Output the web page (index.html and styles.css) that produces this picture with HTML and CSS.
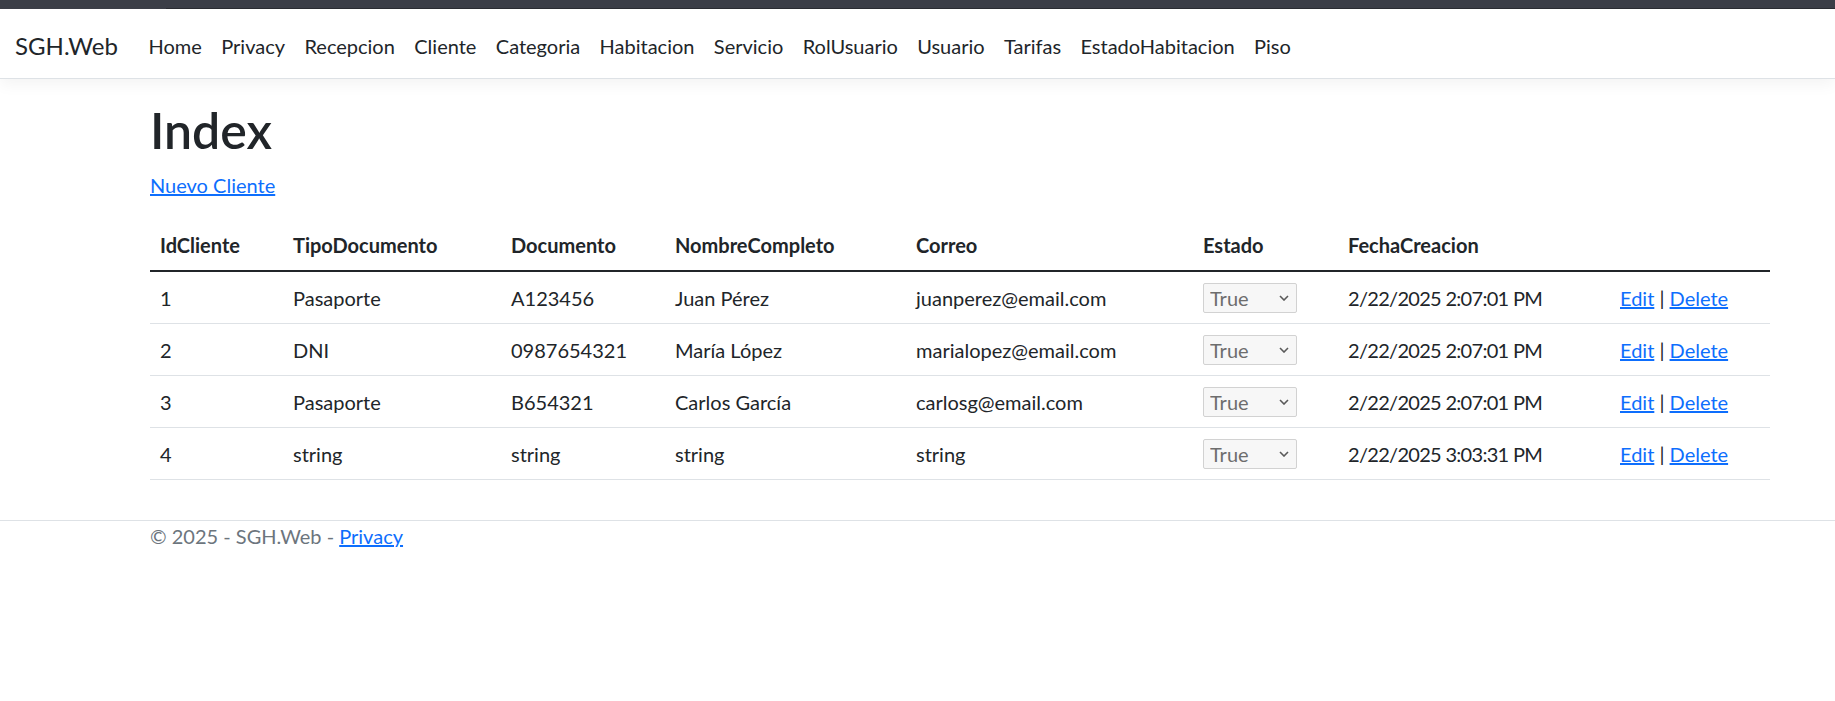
FILE: index.html
```html
<!DOCTYPE html>
<html lang="es">
<head>
<meta charset="utf-8">
<title>Index - SGH.Web</title>
<link rel="stylesheet" href="styles.css">
</head>
<body>
<div class="chrome-bar"></div>
<header class="navbar">
  <a class="brand" href="#">SGH.Web</a>
  <ul class="nav">
    <li><a href="#">Home</a></li>
    <li><a href="#">Privacy</a></li>
    <li><a href="#">Recepcion</a></li>
    <li><a href="#">Cliente</a></li>
    <li><a href="#">Categoria</a></li>
    <li><a href="#">Habitacion</a></li>
    <li><a href="#">Servicio</a></li>
    <li><a href="#">RolUsuario</a></li>
    <li><a href="#">Usuario</a></li>
    <li><a href="#">Tarifas</a></li>
    <li><a href="#">EstadoHabitacion</a></li>
    <li><a href="#">Piso</a></li>
  </ul>
</header>
<main class="container">
  <h1 class="title">Index</h1>
  <p class="actions"><a href="#">Nuevo Cliente</a></p>
  <table class="table">
    <colgroup>
      <col class="c-id"><col class="c-tipo"><col class="c-doc"><col class="c-nombre"><col class="c-correo"><col class="c-estado"><col class="c-fecha"><col class="c-acc">
    </colgroup>
    <thead>
      <tr><th>IdCliente</th><th>TipoDocumento</th><th>Documento</th><th>NombreCompleto</th><th>Correo</th><th>Estado</th><th>FechaCreacion</th><th></th></tr>
    </thead>
    <tbody>
      <tr>
        <td>1</td><td>Pasaporte</td><td>A123456</td><td>Juan Pérez</td><td>juanperez@email.com</td>
        <td><span class="select"><select disabled><option>True</option></select><svg viewBox="0 0 10 6"><path d="M1 1 L5 5 L9 1" /></svg></span></td>
        <td class="date">2/22/2025 2:07:01 PM</td>
        <td><a href="#">Edit</a> | <a href="#">Delete</a></td>
      </tr>
      <tr>
        <td>2</td><td>DNI</td><td>0987654321</td><td>María López</td><td>marialopez@email.com</td>
        <td><span class="select"><select disabled><option>True</option></select><svg viewBox="0 0 10 6"><path d="M1 1 L5 5 L9 1" /></svg></span></td>
        <td class="date">2/22/2025 2:07:01 PM</td>
        <td><a href="#">Edit</a> | <a href="#">Delete</a></td>
      </tr>
      <tr>
        <td>3</td><td>Pasaporte</td><td>B654321</td><td>Carlos García</td><td>carlosg@email.com</td>
        <td><span class="select"><select disabled><option>True</option></select><svg viewBox="0 0 10 6"><path d="M1 1 L5 5 L9 1" /></svg></span></td>
        <td class="date">2/22/2025 2:07:01 PM</td>
        <td><a href="#">Edit</a> | <a href="#">Delete</a></td>
      </tr>
      <tr>
        <td>4</td><td>string</td><td>string</td><td>string</td><td>string</td>
        <td><span class="select"><select disabled><option>True</option></select><svg viewBox="0 0 10 6"><path d="M1 1 L5 5 L9 1" /></svg></span></td>
        <td class="date">2/22/2025 3:03:31 PM</td>
        <td><a href="#">Edit</a> | <a href="#">Delete</a></td>
      </tr>
    </tbody>
  </table>
</main>
<footer class="footer">
  <div class="footer-inner">© 2025 - SGH.Web - <a href="#">Privacy</a></div>
</footer>
</body>
</html>
```

FILE: styles.css
```css
* { box-sizing: border-box; }

html, body {
  margin: 0;
  padding: 0;
}

body {
  font-family: Lato, "Open Sans", "Liberation Sans", sans-serif;
  font-size: 20px;
  line-height: 30px;
  color: #212529;
  background: #fff;
}

a { color: #0d6efd; }

.chrome-bar {
  height: 9px;
  background: #3b3e47;
  border-bottom: 1px solid #3b3e47;
  position: relative;
}
.chrome-bar::after {
  content: "";
  position: absolute;
  left: 166px;
  right: 0;
  bottom: -1px;
  height: 1px;
  background: #2a2c32;
}

.navbar {
  display: flex;
  align-items: center;
  height: 71px;
  margin-top: -1px;
  padding: 5px 15px 0;
  border-bottom: 1px solid #dee2e6;
  box-shadow: 0 5px 15px rgba(0, 0, 0, 0.05);
}

.brand {
  font-size: 24px;
  line-height: 37px;
  color: #212529;
  text-decoration: none;
  margin-right: 21px;
}

.nav {
  display: flex;
  list-style: none;
  margin: 0;
  padding: 0;
}

.nav a {
  display: block;
  padding: 0 9.7px;
  color: #212529;
  text-decoration: none;
}

.container {
  margin-left: 135px;
  width: 1650px;
  padding: 21px 15px 20px;
}

.title {
  margin: 0 0 10px;
  font-size: 50px;
  line-height: 60px;
  font-weight: 600;
}

.actions {
  margin: 0 0 20px;
}

.table {
  width: 1620px;
  table-layout: fixed;
  border-collapse: separate;
  border-spacing: 0;
  margin-bottom: 20px;
}

.c-id { width: 133px; }
.c-tipo { width: 218px; }
.c-doc { width: 164px; }
.c-nombre { width: 241px; }
.c-correo { width: 287px; }
.c-estado { width: 145px; }
.c-fecha { width: 272px; }
.c-acc { width: 160px; }

.table th {
  text-align: left;
  font-weight: 700;
  padding: 10px;
  height: 52px;
  line-height: 30px;
  border-bottom: 2px solid #212529;
  white-space: nowrap;
}

.table td {
  padding: 10px;
  height: 52px;
  line-height: 30px;
  border-bottom: 1px solid #dee2e6;
  vertical-align: middle;
  white-space: nowrap;
}

.date { letter-spacing: -0.7px; }

.select {
  position: relative;
  display: inline-block;
  vertical-align: top;
  width: 94px;
  height: 30px;
}

.select select {
  -webkit-appearance: none;
  appearance: none;
  display: block;
  width: 100%;
  height: 100%;
  margin: 0;
  padding: 0 0 0 6px;
  font-family: inherit;
  font-size: 20px;
  line-height: 28px;
  color: #6d6d6d;
  -webkit-text-fill-color: #6d6d6d;
  opacity: 1;
  background: #f7f7f7;
  border: 1px solid #d2d2d2;
  border-radius: 2px;
}

.select svg {
  position: absolute;
  right: 8px;
  top: 12px;
  width: 10px;
  height: 6px;
  fill: none;
  stroke: #5a5a5a;
  stroke-width: 1.6;
}

.footer {
  border-top: 1px solid #dee2e6;
  color: #6c757d;
}

.footer-inner {
  padding-left: 150px;
  line-height: 30px;
}
```
